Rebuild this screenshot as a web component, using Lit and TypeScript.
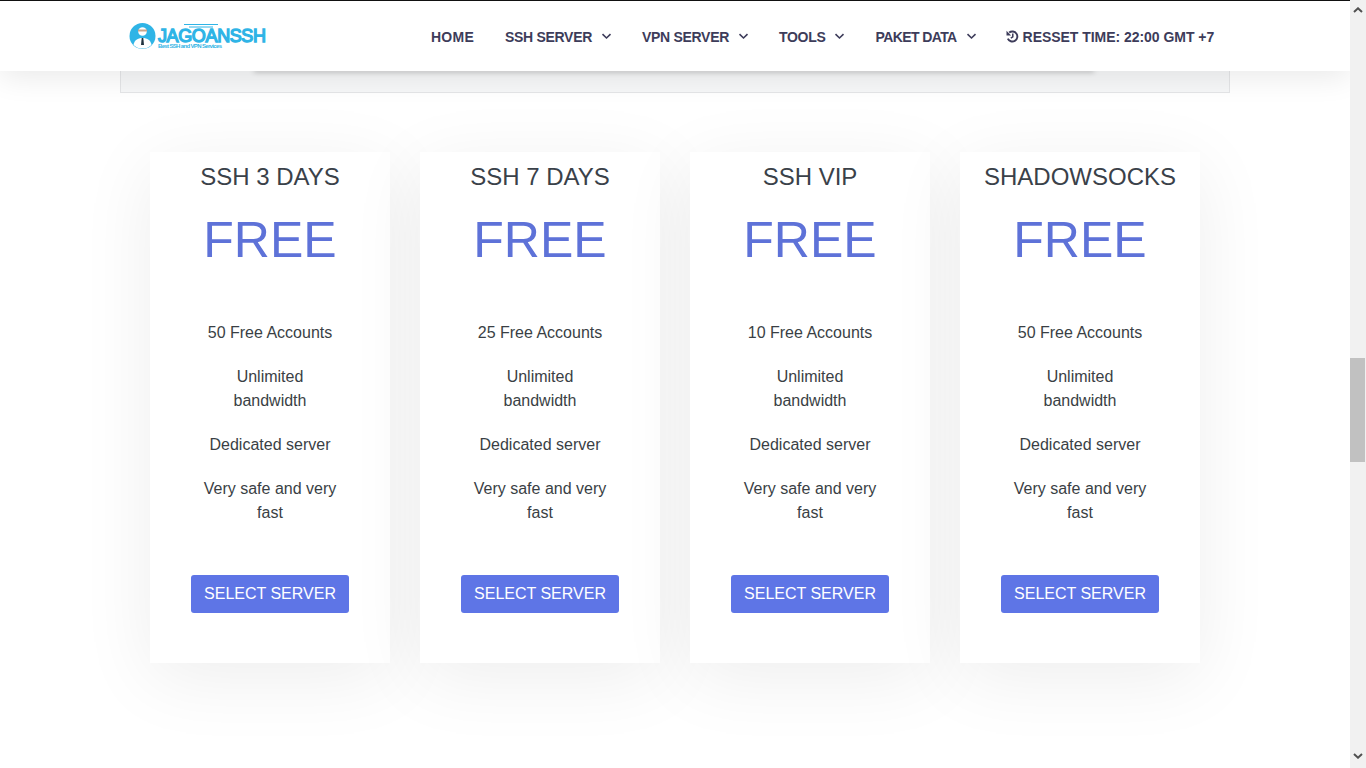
import { LitElement, html, css, svg } from "lit";
import { customElement } from "lit/decorators.js";

const plans = [
  { title: "SSH 3 DAYS", accounts: "50 Free Accounts" },
  { title: "SSH 7 DAYS", accounts: "25 Free Accounts" },
  { title: "SSH VIP", accounts: "10 Free Accounts" },
  { title: "SHADOWSOCKS", accounts: "50 Free Accounts" },
];

const chevron = svg`<svg class="chev" width="11" height="7" viewBox="0 0 11 7"><path d="M1.5 1.2 5.5 5 9.5 1.2" fill="none" stroke="currentColor" stroke-width="1.6"/></svg>`;

@customElement("app-root")
export class AppRoot extends LitElement {
  static styles = css`
    :host { display: block; height: 768px; overflow: hidden; background: #fff; font-family: "Liberation Sans", Arial, sans-serif; }
    .frame { display: flex; height: 768px; }
    .page { flex: 1; min-width: 0; }
    .header { position: relative; z-index: 2; box-sizing: border-box; height: 71px; border-top: 1px solid #111; background: #fff; box-shadow: 0 6px 30px rgba(0,0,0,.09); display: flex; align-items: center; padding: 0 0 0 129px; }
    .logo { display: block; margin-top: -1px; }
    .logo-name { font-family: "Liberation Sans", sans-serif; font-weight: 400; font-size: 18px; fill: #2fb4e6; stroke: #2fb4e6; stroke-width: 1.3; }
    .logo-tag { font-family: "Liberation Sans", sans-serif; font-weight: 700; font-size: 6px; fill: #35b5e5; }
    .nav { display: flex; align-items: center; margin-left: 147px; color: #3d3c5a; font-size: 14px; font-weight: 700; white-space: nowrap; }
    .item { display: flex; align-items: center; padding: 0 15px; margin-top: 1px; }
    .home { letter-spacing: .25px; margin-right: 1px; }
    .t2 { letter-spacing: -.3px; }
    .t3 { letter-spacing: -.6px; }
    .t4 { letter-spacing: -.04px; }
    .chev { margin-left: 9px; }
    .clock { margin: 0 4px 0 -1px; }
    .strip { position: relative; z-index: 1; height: 0; margin: 0 257px 0 255px; box-shadow: 0 0 5px 1px rgba(0,0,0,.35); }
    .band { box-sizing: border-box; margin: 0 120px; height: 22px; background: #f6f7f8; border: 1px solid #e4e5e7; border-top: 0; }
    .cards { display: flex; gap: 30px; padding: 59px 150px 0; }
    .card { box-sizing: border-box; position: relative; width: 240px; height: 511px; padding-top: 10px; background: #fff; box-shadow: 0 15px 70px rgba(0,0,0,.07); display: flex; flex-direction: column; align-items: center; text-align: center; }
    .title { height: 30px; line-height: 30px; font-size: 24px; color: #3a4149; white-space: nowrap; }
    .price { height: 60px; line-height: 60px; margin-top: 18px; font-size: 50px; color: #5e72d8; }
    .list { list-style: none; margin: 51px 0 0; padding: 0; width: 135px; color: #3a3f45; font-size: 16px; line-height: 24px; }
    .list li { margin-bottom: 20px; }
    .btn { box-sizing: border-box; width: 158px; height: 38px; margin-top: 30px; border: 0; border-radius: 3px; background: #5e75e6; color: #fff; font: 16px/36px "Liberation Sans", Arial, sans-serif; text-transform: uppercase; padding: 0; }
    .bar { width: 16px; height: 768px; background: #f1f1f1; position: relative; z-index: 3; display: flex; flex-direction: column; align-items: center; }
    .thumb { width: 15px; height: 104px; margin: 345px 1px 0 0; background: #c1c1c1; align-self: flex-start; }
    .arrow { display: block; margin: 7px 1px 0 0; }
    .arrow.down { margin-top: 291px; }
  `;

  render() {
    return html`
      <div class="frame">
        <div class="page">
          <header class="header">
            <svg class="logo" width="140" height="30" viewBox="0 0 140 30">
              <circle cx="13.5" cy="15" r="13" fill="#2fb4e6"/>
              <path d="M4.5 24c1-5 4-7 9-7s8 2 9 7a13 13 0 0 1-18 0z" fill="#fff"/>
              <circle cx="13.5" cy="10.5" r="4.3" fill="#fff"/>
              <path d="M9 8.5h9v2H9z" fill="#c9a58b"/>
              <path d="M12.7 17h1.6l.7 7h-3z" fill="#20323f"/>
              <path d="M55 3.5h34M60 6h24" stroke="#2fb4e6" fill="none"/>
              <text class="logo-name" x="29" y="20.5" textLength="108">JAGOANSSH</text>
              <text class="logo-tag" x="29" y="27" textLength="64">Best SSH and VPN Services</text>
            </svg>
            <nav class="nav">
              <span class="item home">HOME</span>
              <span class="item t2">SSH SERVER${chevron}</span>
              <span class="item t2">VPN SERVER${chevron}</span>
              <span class="item t2">TOOLS${chevron}</span>
              <span class="item t3">PAKET DATA${chevron}</span>
              <span class="item t4">
                <svg class="clock" width="13" height="13" viewBox="0 0 13 13" fill="none" stroke="currentColor">
                  <path d="M3.2 2.6A5 5 0 1 1 1.8 8.6" stroke-width="1.9"/>
                  <path d="M.5 .8v4.6h4.6z" fill="currentColor" stroke="none"/>
                  <path d="M6.8 3.6v3.2l-2 1.3" stroke-width="1.5"/>
                </svg>RESSET TIME: 22:00 GMT +7
              </span>
            </nav>
          </header>
          <div class="strip"></div>
          <div class="band"></div>
          <section class="cards">
            ${plans.map((p) => html`
              <article class="card">
                <div class="title">${p.title}</div>
                <div class="price">FREE</div>
                <ul class="list">
                  <li>${p.accounts}</li>
                  <li>Unlimited bandwidth</li>
                  <li>Dedicated server</li>
                  <li>Very safe and very fast</li>
                </ul>
                <button class="btn">Select server</button>
              </article>
            `)}
          </section>
        </div>
        <div class="bar">
          <svg class="arrow" width="10" height="6" viewBox="0 0 10 6"><path d="M1 5 5 1.3 9 5" fill="none" stroke="#505050" stroke-width="2"/></svg>
          <div class="thumb"></div>
          <svg class="arrow down" width="10" height="6" viewBox="0 0 10 6"><path d="M1 1 5 4.7 9 1" fill="none" stroke="#505050" stroke-width="2"/></svg>
        </div>
      </div>
    `;
  }
}
